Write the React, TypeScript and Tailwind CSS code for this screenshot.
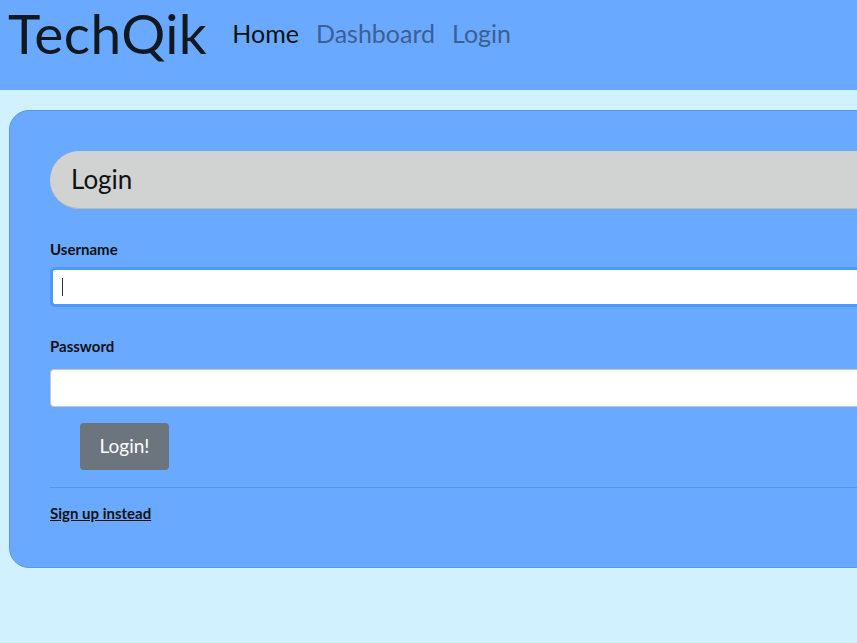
import React from "react";

export default function App() {
  const font = { fontFamily: "'Lato', 'Noto Sans', sans-serif" };
  return (
    <div className="min-h-[643px] w-full overflow-hidden bg-[#d1f1ff]" style={font}>
      <header className="flex h-[90px] items-start bg-[#69a9ff]">
        <div className="ml-[8px] text-[55px] leading-[66px] tracking-[0.5px] text-[#111820]">TechQik</div>
        <nav className="ml-[25px] mt-[18px] flex gap-[17px] text-[25px] leading-[30px]">
          <a className="text-[#111]">Home</a>
          <a className="text-[#3d5f94]">Dashboard</a>
          <a className="text-[#3d5f94]">Login</a>
        </nav>
      </header>
      <div className="pt-[20px] pl-[9px]">
        <div className="w-[1200px] rounded-[20px] border border-[#5b96e3] bg-[#69a9ff] px-10 pt-10 pb-[44px]">
          <div className="flex h-[58px] items-center rounded-l-[29px] border-b border-[#b8baba] bg-[#d1d3d3] pl-[21px] text-[26px] text-[#111]">
            Login
          </div>
          <div className="mt-[30px] text-[15px] font-bold leading-[20px] text-[#111]">Username</div>
          <div className="mt-[8px] flex h-[40px] items-center rounded-[5px] border-[3px] border-[#4b98ff] bg-white pl-[9px]">
            <div className="h-[18px] w-[1px] bg-[#333]" />
          </div>
          <div className="mt-[29px] text-[15px] font-bold leading-[20px] text-[#111]">Password</div>
          <div className="mt-[13px] h-[38px] rounded-[4px] border border-[#c8c8c8] bg-white" />
          <button className="ml-[30px] mt-[16px] h-[47px] w-[89px] rounded-[4px] bg-[#6c757d] text-[19px] text-white">
            Login!
          </button>
          <div className="mt-[17px] h-px bg-[#5a94df]" />
          <a className="mt-[15px] block text-[15px] font-bold leading-[20px] text-[#111] underline">Sign up instead</a>
        </div>
      </div>
    </div>
  );
}
